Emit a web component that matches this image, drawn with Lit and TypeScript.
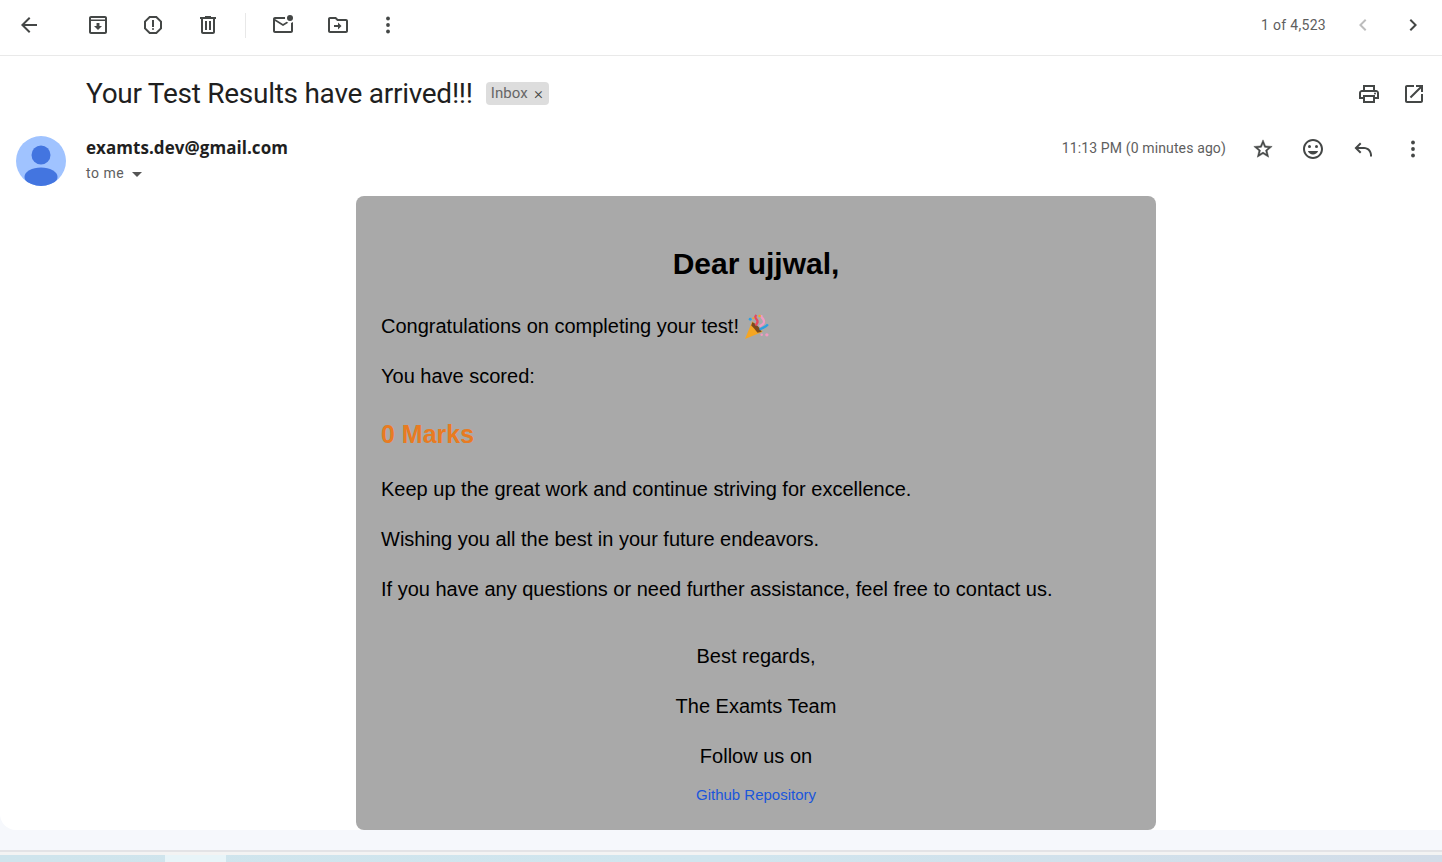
import { LitElement, html, css, svg } from "lit";
import { customElement } from "lit/decorators.js";

const P: Record<string, unknown> = {
  back: svg`<path d="M20 11H7.83l5.59-5.59L12 4l-8 8 8 8 1.41-1.41L7.83 13H20v-2z"/>`,
  archive: svg`<path d="M19 3H5c-1.1 0-2 .9-2 2v14c0 1.1.9 2 2 2h14c1.1 0 2-.9 2-2V5c0-1.1-.9-2-2-2zm0 16H5V8h14v11zM5 6.5V5h14v1.5H5z"/><path d="M13.45 10h-2.9v3H8l4 4 4-4h-2.55z"/>`,
  report: svg`<path d="M15.73 3H8.27L3 8.27v7.46L8.27 21h7.46L21 15.73V8.27L15.73 3zM19 14.9L14.9 19H9.1L5 14.9V9.1L9.1 5h5.8L19 9.1v5.8z"/><circle cx="12" cy="16" r="1"/><path d="M11 7h2v7h-2z"/>`,
  trash: svg`<path d="M15 4V3H9v1H4v2h1v13c0 1.1.9 2 2 2h10c1.1 0 2-.9 2-2V6h1V4h-5zm2 15H7V6h10v13z"/><path d="M9 8h2v9H9zm4 0h2v9h-2z"/>`,
  unread: svg`<path d="M22 8.98V18c0 1.1-.9 2-2 2H4c-1.1 0-2-.9-2-2V6c0-1.1.9-2 2-2h10.1c-.06.32-.1.66-.1 1 0 .34.04.68.1 1H4l8 5 3.67-2.29c.47.43 1.02.76 1.63.98L12 13 4 8v10h16V9.9c.74-.15 1.42-.48 2-.92z"/><circle cx="19" cy="5" r="3"/>`,
  move: svg`<path d="M20 6h-8l-2-2H4c-1.1 0-1.99.9-1.99 2L2 18c0 1.1.9 2 2 2h16c1.1 0 2-.9 2-2V8c0-1.1-.9-2-2-2zm0 12H4V6h5.17l2 2H20v10z"/><path d="M12 14H8v-2h4V9.5l3.5 3.5-3.5 3.5z"/>`,
  more: svg`<circle cx="12" cy="5.5" r="1.9"/><circle cx="12" cy="12" r="1.9"/><circle cx="12" cy="18.5" r="1.9"/>`,
  prev: svg`<path d="M15.41 7.41 14 6l-6 6 6 6 1.41-1.41L10.83 12z"/>`,
  next: svg`<path d="M10 6 8.59 7.41 13.17 12l-4.58 4.59L10 18l6-6z"/>`,
  print: svg`<path d="M19 8h-1V3H6v5H5c-1.66 0-3 1.34-3 3v6h4v4h12v-4h4v-6c0-1.66-1.34-3-3-3zM8 5h8v3H8V5zm8 14H8v-4h8v4zm2-4v-2H6v2H4v-4c0-.55.45-1 1-1h14c.55 0 1 .45 1 1v4h-2z"/><circle cx="18" cy="11.5" r="1"/>`,
  open: svg`<path d="M19 19H5V5h7V3H5c-1.11 0-2 .9-2 2v14c0 1.1.89 2 2 2h14c1.1 0 2-.9 2-2v-7h-2v7zM14 3v2h3.59l-9.83 9.83 1.41 1.41L19 6.41V10h2V3h-7z"/>`,
  star: svg`<path d="M22 9.24l-7.19-.62L12 2 9.19 8.63 2 9.24l5.46 4.73L5.82 21 12 17.27 18.18 21l-1.63-7.03L22 9.24zM12 15.4l-3.76 2.27 1-4.28-3.32-2.88 4.38-.38L12 6.1l1.71 4.04 4.38.38-3.32 2.88 1 4.28L12 15.4z"/>`,
  smile: svg`<path d="M12 2C6.48 2 2 6.48 2 12s4.48 10 10 10 10-4.48 10-10S17.52 2 12 2zm0 18c-4.41 0-8-3.59-8-8s3.59-8 8-8 8 3.59 8 8-3.59 8-8 8z"/><circle cx="15.5" cy="9.5" r="1.5"/><circle cx="8.5" cy="9.5" r="1.5"/><path d="M12 17.5c2.33 0 4.3-1.46 5.11-3.5H6.89c.8 2.04 2.78 3.5 5.11 3.5z"/>`,
  reply: svg`<path d="M9 16.5 3.5 11 9 5.5l1.4 1.4L7.3 10H13c4.4 0 8 3.6 8 8v1.5h-2V18c0-3.3-2.7-6-6-6H7.3l3.1 3.1z"/>`,
};

const icon = (n: string) => html`<svg class="ic" viewBox="0 0 24 24" aria-hidden="true">${P[n]}</svg>`;

@customElement("app-root")
export class AppRoot extends LitElement {
  static styles = css`
    :host { display: flex; flex-direction: column; height: 100vh; min-height: 862px; overflow: hidden; background: #f6f8fc; font-family: Roboto, "Liberation Sans", sans-serif; color: #1f1f1f; }
    .panel { background: #fff; height: 830px; border-bottom-left-radius: 16px; display: flex; flex-direction: column; flex: none; }
    .toolbar { height: 50px; padding: 0 9px 5px; flex: none; border-bottom: 1px solid #e9e9e9; display: flex; align-items: center; color: #444746; box-sizing: content-box; }
    .btn { width: 40px; height: 40px; display: flex; align-items: center; justify-content: center; flex: none; fill: #444746; }
    .ic { width: 24px; height: 24px; fill: inherit; display: block; }
    .starbtn .ic { width: 22px; height: 22px; stroke: #444746; stroke-width: .5; }
    .gap29 { margin-left: 29px; }
    .gap15 { margin-left: 15px; }
    .gap10 { margin-left: 10px; }
    .sep { width: 1px; height: 25px; background: #e8e8e8; margin: 0 17px 0 17px; flex: none; }
    .spacer { flex: 1; }
    .count { font-size: 14px; color: #5e5e5e; margin-right: 17px; letter-spacing: .3px; }
    .dim { fill: #bdbdbd; }
    .subject { height: 75px; flex: none; display: flex; align-items: center; padding: 0 8px 0 86px; }
    .title { font-family: Roboto, sans-serif; font-size: 28px; line-height: 36px; font-weight: 400; margin: 0; color: #1f1f1f; letter-spacing: -.27px; white-space: nowrap; }
    .chip { margin-left: 13px; height: 23px; background: #ddd; border-radius: 4px; display: flex; align-items: center; padding: 0 6px 1px 5px; box-sizing: border-box; font-size: 15px; letter-spacing: .1px; color: #666; gap: 6px; }
    .x { font-size: 17px; font-weight: 300; color: #444; line-height: 1; }
    .tight { margin-left: 5px; }
    .sender { height: 65px; flex: none; display: flex; padding-left: 16px; padding-right: 9px; box-sizing: border-box; }
    .avatar { width: 50px; height: 50px; margin-top: 5px; flex: none; display: block; }
    .who { margin-left: 20px; padding-top: 5px; }
    .from { font-family: "Open Sans", sans-serif; font-weight: 700; font-size: 17px; line-height: 24px; color: #1f1f1f; letter-spacing: .05px; }
    .to { display: flex; align-items: center; font-size: 14px; letter-spacing: .5px; color: #5e5e5e; margin-top: 3px; line-height: 20px; }
    .caret { width: 0; height: 0; border-left: 5px solid transparent; border-right: 5px solid transparent; border-top: 5px solid #555; margin-left: 8px; margin-top: 2px; }
    .meta { display: flex; align-items: flex-start; }
    .time { font-size: 14px; letter-spacing: .13px; color: #5e5e5e; line-height: 34px; margin-right: 17px; }
    .iconbar { display: flex; gap: 10px; margin-top: -2px; }
    .body { display: flex; justify-content: center; flex: 1; padding-left: 70px; }
    .card { width: 800px; height: 634px; box-sizing: border-box; background: #a9a9a9; border-radius: 8px; padding: 48px 25px 25px; font-family: "Liberation Sans", Arial, sans-serif; color: #000; font-size: 20px; line-height: 30px; }
    .card h1 { margin: 0 0 27px; text-align: center; font-size: 30px; line-height: 40px; font-weight: 700; }
    .card p { margin: 0 0 20px; }
    .row { display: flex; align-items: center; gap: 6px; }
    .party { width: 25px; height: 25px; display: block; }
    .marks { margin: 28px 0 25px; font-size: 25px; font-weight: 700; color: #e87b22; line-height: 30px; }
    .sign { text-align: center; margin-top: 37px; }
    .link { display: block; margin-top: -6px; text-align: center; font-size: 15px; line-height: 20px; color: #1a56db; text-decoration: none; }
    .foot { height: 20px; flex: none; }
    .line { height: 2px; flex: none; background: #e3e3e6; }
    .line2 { height: 3px; flex: none; background: #f3f3f3; }
    .wall { flex: 1; display: flex; background: linear-gradient(90deg, #cfe4ec 0%, #d0e5ee 50%, #d2dce8 100%); }
    .wall .a { width: 165px; }
    .wall .b { width: 61px; background: #e8f4f8; }
  `;

  render() {
    return html`
      <div class="panel">
        <div class="toolbar">
          <div class="btn">${icon("back")}</div>
          <div class="btn gap29">${icon("archive")}</div>
          <div class="btn gap15">${icon("report")}</div>
          <div class="btn gap15">${icon("trash")}</div>
          <div class="sep"></div>
          <div class="btn">${icon("unread")}</div>
          <div class="btn gap15">${icon("move")}</div>
          <div class="btn gap10">${icon("more")}</div>
          <div class="spacer"></div>
          <div class="count">1 of 4,523</div>
          <div class="btn dim">${icon("prev")}</div>
          <div class="btn gap10">${icon("next")}</div>
        </div>
        <div class="subject">
          <h2 class="title">Your Test Results have arrived!!!</h2>
          <div class="chip">Inbox <span class="x">×</span></div>
          <div class="spacer"></div>
          <div class="btn">${icon("print")}</div>
          <div class="btn tight">${icon("open")}</div>
        </div>
        <div class="sender">
          <svg class="avatar" viewBox="0 0 50 50">
            <defs><clipPath id="c"><circle cx="25" cy="25" r="25"/></clipPath></defs>
            <circle cx="25" cy="25" r="25" fill="#a0c3ff"/>
            <g clip-path="url(#c)" fill="#4375e0">
              <circle cx="25" cy="19" r="9.5"/>
              <ellipse cx="25" cy="41" rx="16.5" ry="9.5"/>
            </g>
          </svg>
          <div class="who">
            <div class="from">examts.dev@gmail.com</div>
            <div class="to">to me <span class="caret"></span></div>
          </div>
          <div class="spacer"></div>
          <div class="meta">
            <div class="time">11:13 PM (0 minutes ago)</div>
            <div class="iconbar">
              <div class="btn starbtn">${icon("star")}</div>
              <div class="btn">${icon("smile")}</div>
              <div class="btn">${icon("reply")}</div>
              <div class="btn">${icon("more")}</div>
            </div>
          </div>
        </div>
        <div class="body">
          <div class="card">
            <h1>Dear ujjwal,</h1>
            <p class="row">Congratulations on completing your test!
              <svg class="party" viewBox="0 0 24 24" aria-hidden="true">
                <path d="M0 24 7 7l10 10z" fill="#f5a623"/>
                <path d="M7 8c3 1 7 5 9 9l-4 1c-2-3-4-5-6-7z" fill="#7a4a1e"/>
                <path d="M10 11c2-2 3-4 1-6s-1-3 0-4" fill="none" stroke="#e8475f" stroke-width="2.2"/>
                <path d="M14 12c3-2 5-3 4-6s-3-2-2-5" fill="none" stroke="#f29ac2" stroke-width="2.2"/>
                <path d="M14 15c3-2 6-2 8-5" fill="none" stroke="#2f9fe0" stroke-width="2.2"/>
                <circle cx="5" cy="5" r="1.4" fill="#2f9fe0"/><circle cx="14" cy="2" r="1.2" fill="#f5a623"/>
                <circle cx="21" cy="20" r="1.6" fill="#f29ac2"/><circle cx="16" cy="20" r="1.2" fill="#f29ac2"/>
                <circle cx="8" cy="4" r="1" fill="#f5a623"/>
              </svg>
            </p>
            <p>You have scored:</p>
            <div class="marks">0 Marks</div>
            <p>Keep up the great work and continue striving for excellence.</p>
            <p>Wishing you all the best in your future endeavors.</p>
            <p>If you have any questions or need further assistance, feel free to contact us.</p>
            <div class="sign">
              <p>Best regards,</p>
              <p>The Examts Team</p>
              <p>Follow us on</p>
            </div>
            <a class="link" href="#">Github Repository</a>
          </div>
        </div>
      </div>
      <div class="foot"></div>
      <div class="line"></div>
      <div class="line2"></div>
      <div class="wall"><div class="a"></div><div class="b"></div></div>
    `;
  }
}
